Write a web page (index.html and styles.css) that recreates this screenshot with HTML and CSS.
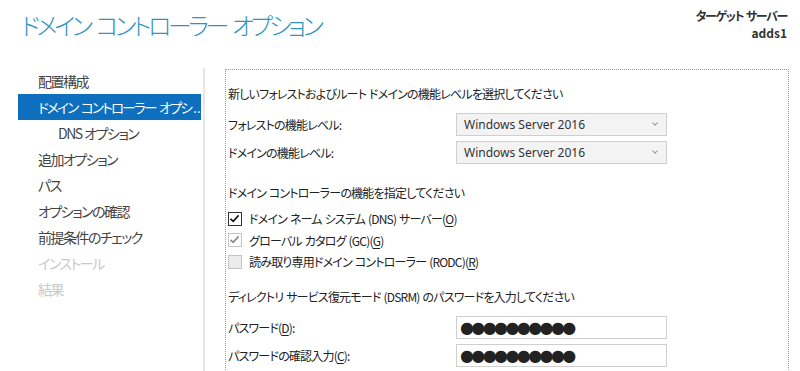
FILE: index.html
```html
<!DOCTYPE html>
<html lang="ja">
<head>
    <meta charset="UTF-8">
    <meta name="viewport" content="width=device-width, initial-scale=1.0">
    <title>ドメイン コントローラー オプション</title>
    <link rel="stylesheet" href="styles.css">
</head>
<body>

<div class="header">
    <h1 class="title">ドメイン コントローラー オプション</h1>
    <div class="target">
        <div class="target-label">ターゲット サーバー</div>
        <div class="target-name">adds1</div>
    </div>
</div>

<div class="main">
    <ul class="nav">
        <li>配置構成</li>
        <li class="active">ドメイン コントローラー オプシ<span class="more">...</span></li>
        <li class="sub">DNS オプション</li>
        <li>追加オプション</li>
        <li>パス</li>
        <li>オプションの確認</li>
        <li>前提条件のチェック</li>
        <li class="disabled">インストール</li>
        <li class="disabled">結果</li>
    </ul>

    <div class="content">
        <div class="panel">
            <p class="section-title first">新しいフォレストおよびルート ドメインの機能レベルを選択してください</p>
            <div class="form-row">
                <label>フォレストの機能レベル:</label>
                <div class="select">Windows Server 2016<span class="chevron"></span></div>
            </div>
            <div class="form-row">
                <label>ドメインの機能レベル:</label>
                <div class="select">Windows Server 2016<span class="chevron"></span></div>
            </div>

            <p class="section-title">ドメイン コントローラーの機能を指定してください</p>
            <div class="check-row">
                <span class="box checked"><svg viewBox="0 0 13 13" width="13" height="13"><path d="M2.5 6.8 L5.2 9.4 L10.6 3.4" fill="none" stroke="#111" stroke-width="1.6"/></svg></span>
                <span>ドメイン ネーム システム (DNS) サーバー(<u>O</u>)</span>
            </div>
            <div class="check-row">
                <span class="box dim"><svg viewBox="0 0 13 13" width="13" height="13"><path d="M2.5 6.8 L5.2 9.4 L10.6 3.4" fill="none" stroke="#888" stroke-width="1.6"/></svg></span>
                <span>グローバル カタログ (GC)(<u>G</u>)</span>
            </div>
            <div class="check-row">
                <span class="box dim off"></span>
                <span>読み取り専用ドメイン コントローラー (RODC)(<u>R</u>)</span>
            </div>

            <p class="section-title">ディレクトリ サービス復元モード (DSRM) のパスワードを入力してください</p>
            <div class="form-row">
                <label>パスワード(<u>D</u>):</label>
                <div class="password">●●●●●●●●●●</div>
            </div>
            <div class="form-row">
                <label>パスワードの確認入力(<u>C</u>):</label>
                <div class="password">●●●●●●●●●●</div>
            </div>
        </div>
    </div>
</div>

</body>
</html>
```

FILE: styles.css
```css
body {
    margin: 0;
    background-color: #fff;
    font-family: "Noto Sans CJK JP", "Noto Sans", sans-serif;
    font-feature-settings: "palt";
    color: #222;
    overflow: hidden;
}
.header {
    display: flex;
    justify-content: space-between;
    height: 68px;
}
.title {
    margin: 7px 0 0 21px;
    font-size: 24px;
    font-weight: 300;
    color: #3193c0;
    letter-spacing: -3.4px;
    word-spacing: 4px;
}
.target {
    margin: 7px 13px 0 0;
    text-align: right;
    font-size: 12px;
    font-weight: bold;
    color: #333;
    line-height: 17px;
}
.target-label {
    letter-spacing: -1.3px;
    word-spacing: 1px;
}
.main {
    display: flex;
}
.nav {
    list-style: none;
    margin: 0;
    padding: 0 2px 0 18px;
    width: 183px;
    height: 303px;
    border-right: 2px solid #e6e6e6;
}
.nav li {
    height: 26px;
    line-height: 26px;
    padding-left: 20px;
    font-size: 14px;
    letter-spacing: -1.5px;
    word-spacing: 1px;
    color: #444;
    white-space: nowrap;
}
.nav li.active {
    background-color: #0e6fbf;
    color: #fff;
    font-size: 13.5px;
    letter-spacing: -1.7px;
    word-spacing: 2px;
}
.nav li.active .more {
    letter-spacing: 0;
    margin-left: 2px;
}
.nav li.sub {
    padding-left: 40px;
}
.nav li.disabled {
    color: #c9c9c9;
}
.content {
    flex: 1;
    padding: 1px 11px 0 20px;
}
.panel {
    border: 1px dotted #999;
    border-bottom: none;
    height: 310px;
    padding: 0 0 0 2px;
    font-size: 12px;
    letter-spacing: -0.8px;
    word-spacing: 1px;
}
.section-title {
    margin: 0;
    height: 20px;
    line-height: 20px;
}
.section-title.first {
    margin-top: 14px;
}
.form-row {
    display: flex;
    align-items: center;
    height: 23px;
    margin-top: 5px;
}
.section-title + .form-row {
    margin-top: 9px;
}
.form-row label {
    width: 228px;
}
.select {
    position: relative;
    box-sizing: border-box;
    width: 211px;
    height: 23px;
    line-height: 21px;
    padding-left: 7px;
    border: 1px solid #cfcfcf;
    background-color: #f3f3f3;
    font-family: "Noto Sans", sans-serif;
    font-size: 12px;
    letter-spacing: 0;
    word-spacing: 0;
    color: #333;
}
.chevron {
    position: absolute;
    right: 9px;
    top: 7px;
    width: 3px;
    height: 3px;
    border-right: 1px solid #999;
    border-bottom: 1px solid #999;
    transform: rotate(45deg);
}
.form-row + .section-title {
    margin-top: 19px;
}
.check-row {
    display: flex;
    align-items: center;
    height: 21.5px;
    gap: 7px;
}
.section-title + .check-row {
    margin-top: 5px;
}
.box {
    box-sizing: border-box;
    width: 14px;
    height: 14px;
    border: 1px solid #333;
    background-color: #fff;
    display: flex;
}
.box svg {
    margin: -1px 0 0 -1px;
}
.box.dim {
    border-color: #c4c4c4;
}
.box.off {
    background-color: #ececec;
}
.check-row + .section-title {
    margin-top: 14px;
}
.password {
    box-sizing: border-box;
    width: 211px;
    height: 23px;
    line-height: 21px;
    padding-left: 3px;
    border: 1px solid #cfcfcf;
    background-color: #fff;
    font-family: "DejaVu Sans", sans-serif;
    font-size: 16px;
    letter-spacing: -2.6px;
    word-spacing: 0;
    color: #222;
}
u {
    text-underline-offset: 2px;
}
```
